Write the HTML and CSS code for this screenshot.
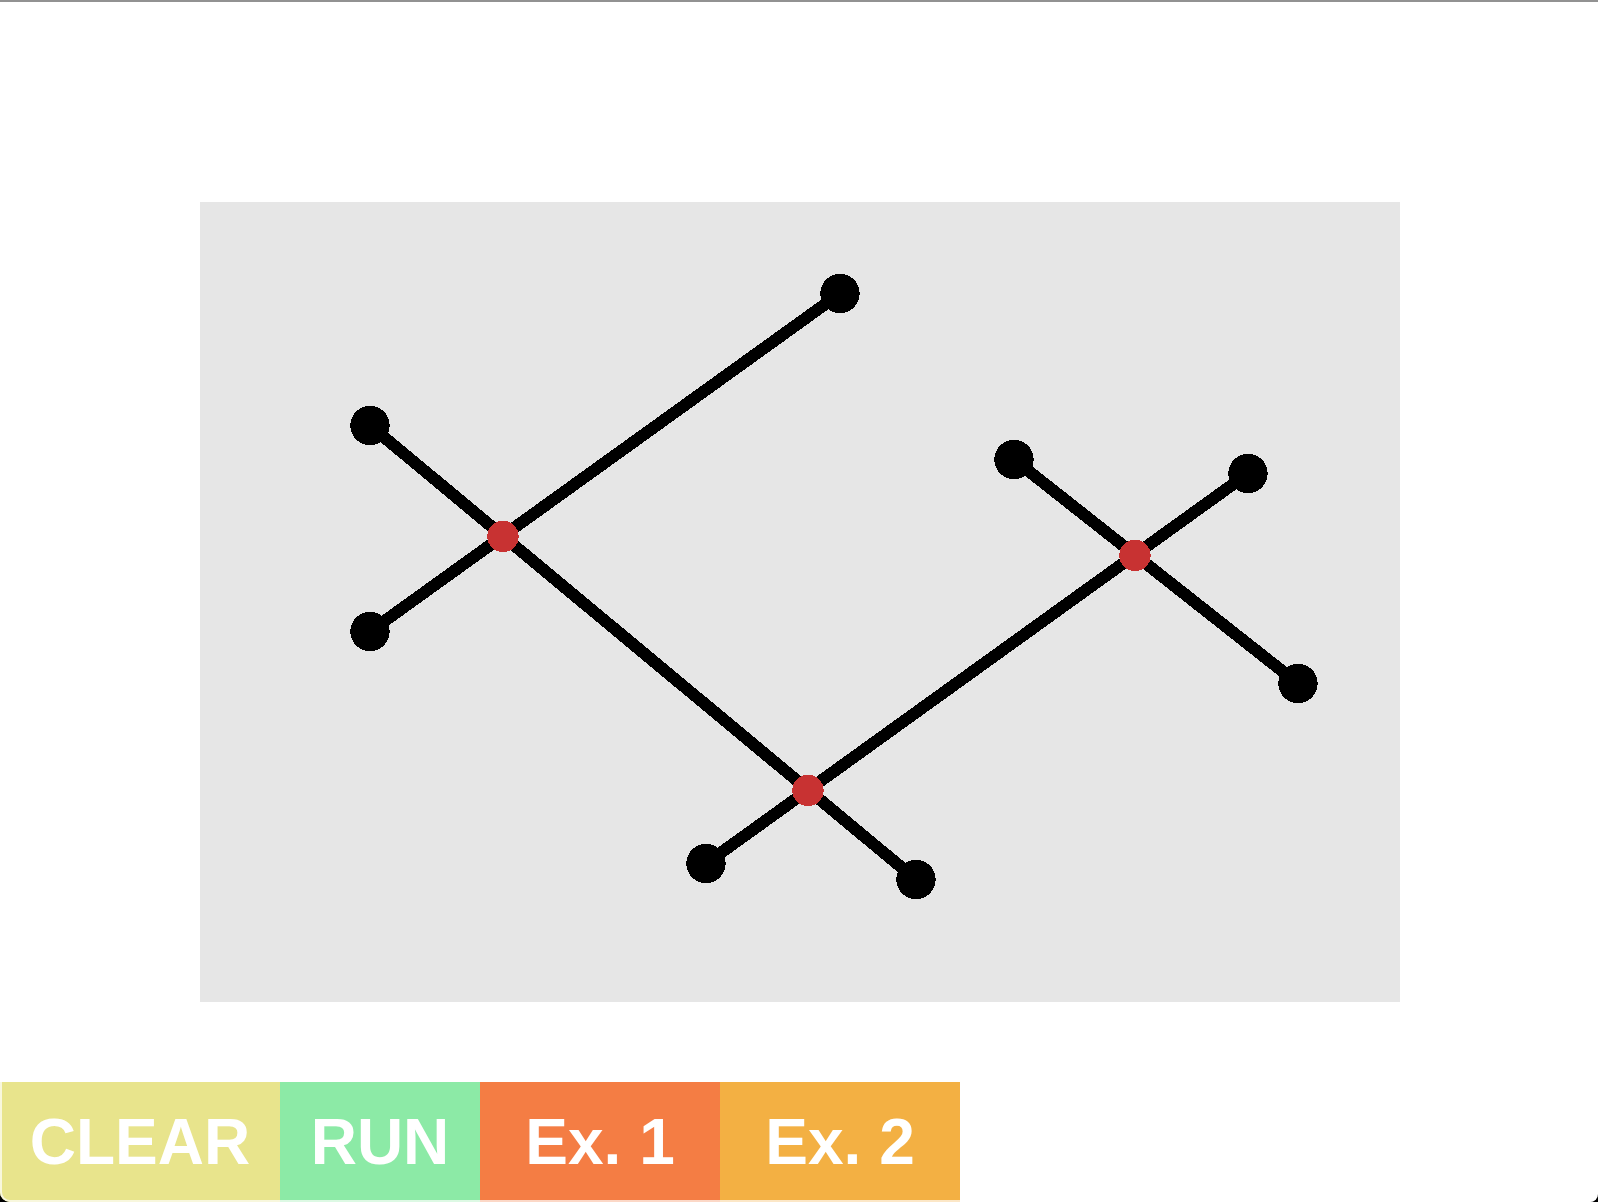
FILE: index.html
```html
<!DOCTYPE html>
<html lang="en">
<head>
  <meta charset="utf-8">
  <title>Segment intersections</title>
  <link rel="stylesheet" href="styles.css">
</head>
<body>
  <div class="window">
    <main class="stage">
      <svg class="board" viewBox="0 0 1200 800" role="img" aria-label="Line segments with their intersections" shape-rendering="crispEdges">
        <g class="segments">
          <line x1="170" y1="429.5" x2="640" y2="91.5"/>
          <line x1="170" y1="223.5" x2="716" y2="677.5"/>
          <line x1="506" y1="661.5" x2="1048" y2="271.5"/>
          <line x1="814" y1="257.5" x2="1098" y2="481.5"/>
        </g>
        <g class="endpoints">
          <circle cx="170" cy="429.5" r="19.7"/>
          <circle cx="640" cy="91.5" r="19.7"/>
          <circle cx="170" cy="223.5" r="19.7"/>
          <circle cx="716" cy="677.5" r="19.7"/>
          <circle cx="506" cy="661.5" r="19.7"/>
          <circle cx="1048" cy="271.5" r="19.7"/>
          <circle cx="814" cy="257.5" r="19.7"/>
          <circle cx="1098" cy="481.5" r="19.7"/>
        </g>
        <g class="crossings">
          <circle cx="303" cy="334.5" r="15.7"/>
          <circle cx="608" cy="588.5" r="15.7"/>
          <circle cx="935" cy="353.5" r="15.7"/>
        </g>
      </svg>
    </main>
    <div class="toolbar">
      <button class="tool tool-clear" type="button">CLEAR</button>
      <button class="tool tool-run" type="button">RUN</button>
      <button class="tool tool-first" type="button">Ex. 1</button>
      <button class="tool tool-second" type="button">Ex. 2</button>
    </div>
  </div>
</body>
</html>
```

FILE: styles.css
```css
* {
  box-sizing: border-box;
}

html {
  background: #000;
}

body {
  margin: 0;
  font-family: "Liberation Sans", Arial, Helvetica, sans-serif;
}

.window {
  position: relative;
  display: flex;
  flex-direction: column;
  min-height: 100vh;
  overflow: hidden;
  background: #fff;
  border-top: 2px solid #929292;
  border-radius: 0 0 8px 10px;
}

/* Pale rim of the window, over the buttons */
.window::after {
  content: "";
  position: absolute;
  inset: 0;
  border: solid rgba(255, 255, 255, 0.7);
  border-width: 0 0 2px 2px;
  border-radius: 0 0 8px 10px;
  pointer-events: none;
}

.stage {
  flex: 1;
  padding: 200px 198px 80px 200px;
}

.board {
  display: block;
  width: 100%;
  height: auto;
  background: #e6e6e6;
}

.segments {
  stroke: #000;
  stroke-width: 12px;
}

.endpoints {
  fill: #000;
}

.crossings {
  fill: #c83232;
}

.toolbar {
  display: flex;
}

.tool {
  width: 240px;
  height: 120px;
  padding: 0;
  border: 0;
  color: #fff;
  font: bold 64px "Liberation Sans", Arial, Helvetica, sans-serif;
  cursor: pointer;
}

.tool-clear {
  width: 280px;
  background: #e8e48c;
}

.tool-run {
  width: 200px;
  background: #8ceaa6;
}

.tool-first {
  background: #f47d44;
}

.tool-second {
  background: #f3b043;
}
```
